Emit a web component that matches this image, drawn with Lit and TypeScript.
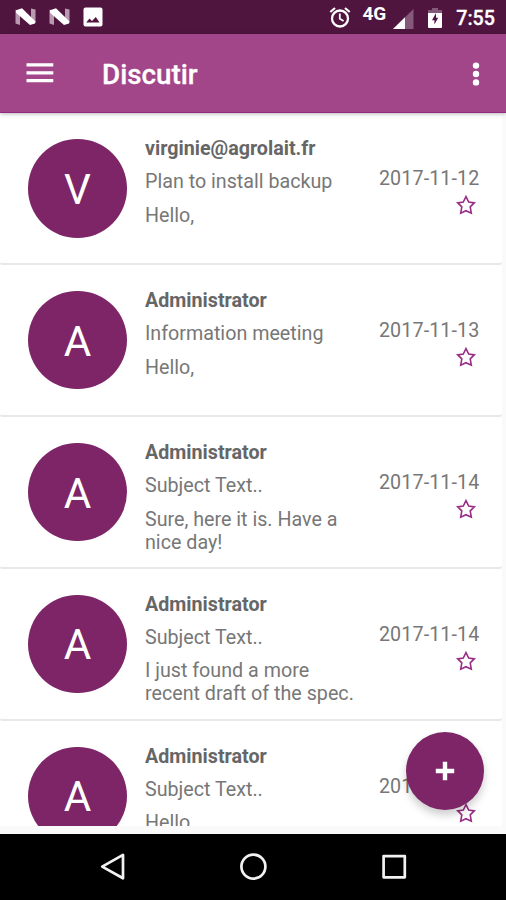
import { LitElement, html, css, svg } from "lit";
import { customElement, property } from "lit/decorators.js";

interface Message {
  author: string;
  subject: string;
  body: string;
  date: string;
}

const MESSAGES: Message[] = [
  { author: "virginie@agrolait.fr", subject: "Plan to install backup", body: "Hello,", date: "2017-11-12" },
  { author: "Administrator", subject: "Information meeting", body: "Hello,", date: "2017-11-13" },
  { author: "Administrator", subject: "Subject Text..", body: "Sure, here it is. Have a nice day!", date: "2017-11-14" },
  { author: "Administrator", subject: "Subject Text..", body: "I just found a more recent draft of the spec.", date: "2017-11-14" },
  { author: "Administrator", subject: "Subject Text..", body: "Hello,", date: "2017-11-14" },
];

const nougat = svg`
  <path d="M0.5 1.5 L5 4 V17 L0.5 15.5 Z M16 0.5 L20.5 1.5 V14.5 L16 13 Z" fill="#b899ae"/>
  <path d="M1 2.2 L7 0.3 L20.5 13.5 L20 15.5 L15 17 L1 4.8 Z" fill="#fff"/>`;

@customElement("status-bar")
class StatusBar extends LitElement {
  static styles = css`
    :host { display: flex; align-items: center; height: 34px; background: #50153f; color: #fff;
      padding: 0 11px 0 15px; box-sizing: border-box; font-weight: 500; }
    svg { display: block; flex: none; }
    .n { margin-right: 13px; }
    .grow { flex: 1; }
    .net { font-size: 19px; line-height: 18px; margin: -7px 7px 0 11px; font-weight: 700; }
    .signal { margin: 3px 14px 0 0; }
    .battery { margin: 2px 14px 0 0; }
    .time { font-size: 19.7px; line-height: 22px; margin-top: 3px; -webkit-text-stroke: 0.3px #fff; }
  `;
  render() {
    return html`
      <svg class="n" width="21" height="18" viewBox="0 0 21 18">${nougat}</svg>
      <svg class="n" width="21" height="18" viewBox="0 0 21 18">${nougat}</svg>
      <svg width="20" height="20" viewBox="0 0 20 20">
        <rect x="0.5" y="0.5" width="19" height="19" rx="2" fill="#fff"/>
        <path d="M3.2 15.5 L6.5 11.5 L9 14 L12.8 10 L16.5 15.5 Z" fill="#50153f"/>
      </svg>
      <span class="grow"></span>
      <svg width="22" height="22" viewBox="0 0 22 22" fill="none" stroke="#fff">
        <circle cx="11" cy="12.5" r="8" stroke-width="2.3"/>
        <path d="M1.3 6 L6 2 M20.7 6 L16 2" stroke-width="2.2"/>
        <path d="M10.8 7.5 V12.8 L14.6 15.1" stroke-width="1.8"/>
      </svg>
      <span class="net">4G</span>
      <svg class="signal" width="21" height="20" viewBox="0 0 21 20">
        <path d="M0 20 L20.5 0 V20 Z" fill="#85597a"/>
        <path d="M0 20 L12 8.3 V20 Z" fill="#fff"/>
      </svg>
      <svg class="battery" width="14" height="20" viewBox="0 0 14 20">
        <path d="M4 0 H10 V2 H14 V5 H0 V2 H4 Z" fill="#85597a"/>
        <path d="M0 5 H14 V19 Q14 20 13 20 H1 Q0 20 0 19 Z" fill="#fff"/>
        <path d="M8 5 L4 12.2 H6.4 V16.5 L10.2 9.8 H8 Z" fill="#50153f"/>
      </svg>
      <span class="time">7:55</span>`;
  }
}

@customElement("tool-bar")
class ToolBar extends LitElement {
  static styles = css`
    :host { display: flex; align-items: center; height: 79px; box-sizing: border-box; padding: 0 24px 0 26px;
      background: #a24689; border-bottom: 1.5px solid #932b7c; color: #fff;
      box-shadow: 0 1px 4px rgba(0, 0, 0, 0.28); position: relative; }
    .title { flex: 1; margin: 4px 0 0 48px; font-size: 27.8px; line-height: 34px; font-weight: 500;
      -webkit-text-stroke: 0.3px #fff; }
    svg { display: block; }
    .dots { margin-top: 1px; }
  `;
  render() {
    return html`
      <svg width="28" height="22" viewBox="0 0 28 22" fill="#fff">
        <path d="M0.5 1.2 H27.3 V4.6 H0.5 Z M0.5 9.2 H27.3 V12.6 H0.5 Z M0.5 16.9 H27.3 V20.3 H0.5 Z"/>
      </svg>
      <span class="title">Discutir</span>
      <svg class="dots" width="12" height="26" viewBox="0 0 12 26" fill="#fff">
        <circle cx="6" cy="4.6" r="3.2"/><circle cx="6" cy="13" r="3.2"/><circle cx="6" cy="21.4" r="3.2"/>
      </svg>`;
  }
}

@customElement("message-row")
class MessageRow extends LitElement {
  @property({ attribute: false }) message!: Message;
  static styles = css`
    :host { display: flex; box-sizing: border-box; height: 151.9px; padding: 26px 22px 0 28.3px; margin-right: 4.5px;
      background: #fff; border-bottom: 2px solid #e8e8e8; border-radius: 0 0 3px 3px;
      color: #777; font-size: 19.7px; line-height: 23px; }
    .avatar { width: 98.5px; height: 98.5px; border-radius: 50%; background: #7d2567; color: #fff; flex: none;
      display: flex; align-items: center; justify-content: center; font-size: 42.2px; line-height: 50px; }
    .letter { margin-top: 3px; }
    .text { flex: none; width: 216px; margin: -2px 0 0 18.2px; }
    .author { font-weight: 700; color: #666; }
    .line { margin-bottom: 10.4px; }
    .meta { flex: 1; display: flex; flex-direction: column; align-items: flex-end; padding-top: 28.4px; margin-left: -20px; }
    .date { white-space: nowrap; letter-spacing: 0.12px; }
    svg { display: block; margin: 3.6px 2.5px 0 0; }
  `;
  render() {
    const m = this.message;
    return html`
      <div class="avatar"><span class="letter">${m.author[0].toUpperCase()}</span></div>
      <div class="text">
        <div class="line author">${m.author}</div>
        <div class="line">${m.subject}</div>
        <div>${m.body}</div>
      </div>
      <div class="meta">
        <span class="date">${m.date}</span>
        <svg width="22" height="22" viewBox="0 0 22 22" fill="none" stroke="#9a2d85" stroke-width="1.6">
          <path d="M11 2.6 L13.7 8.1 L19.3 8.9 L15.2 12.9 L16.3 19.2 L11 16.7 L5.7 19.2 L6.8 12.9 L2.7 8.9 L8.3 8.1 Z"/>
        </svg>
      </div>`;
  }
}

@customElement("nav-bar")
class NavBar extends LitElement {
  static styles = css`
    :host { display: flex; align-items: center; justify-content: center; gap: 112.5px; height: 66.5px; background: #000; }
    svg { display: block; }
  `;
  render() {
    const glyph = (shape: unknown) => html`
      <svg width="28" height="28" viewBox="0 0 28 28" fill="none" stroke="#f2f2f2" stroke-width="2.7" stroke-linejoin="round">${shape}</svg>`;
    return html`
      ${glyph(svg`<path d="M3.2 13.6 L24 1.9 V25.3 Z"/>`)}
      ${glyph(svg`<circle cx="14.4" cy="13.6" r="12"/>`)}
      ${glyph(svg`<rect x="3.6" y="3.1" width="21.2" height="21.2"/>`)}`;
  }
}

@customElement("app-root")
class AppRoot extends LitElement {
  static styles = css`
    :host { display: flex; flex-direction: column; height: 900px; width: 506px; position: relative; overflow: hidden;
      background: #fafafa; font-family: Roboto, "Noto Sans", sans-serif; }
    status-bar, tool-bar, nav-bar { flex: none; }
    tool-bar { z-index: 1; }
    .list { flex: 1; min-height: 0; overflow: hidden; margin-bottom: 8px; }
    .fab { position: absolute; right: 22px; bottom: 90px; width: 78px; height: 78px; border-radius: 50%;
      background: #7d2567; display: flex; align-items: center; justify-content: center;
      box-shadow: 0 5px 8px rgba(0, 0, 0, 0.2); }
  `;
  render() {
    return html`
      <status-bar></status-bar>
      <tool-bar></tool-bar>
      <div class="list">${MESSAGES.map((m) => html`<message-row .message=${m}></message-row>`)}</div>
      <nav-bar></nav-bar>
      <div class="fab">
        <svg width="20" height="20" viewBox="0 0 20 20"><path d="M10 0.8 V19.2 M0.8 10 H19.2" stroke="#fff" stroke-width="4.4"/></svg>
      </div>`;
  }
}
